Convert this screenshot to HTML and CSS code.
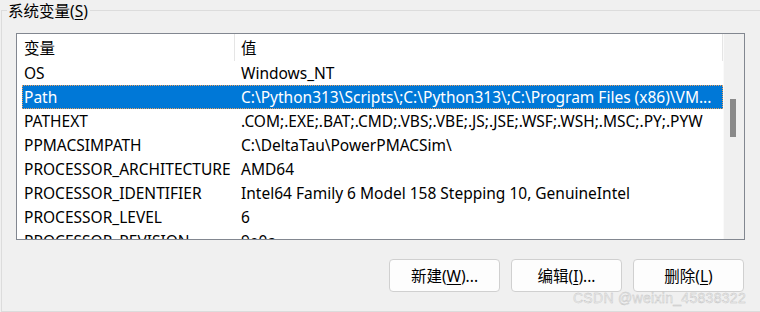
FILE: index.html
```html
<!DOCTYPE html>
<html lang="zh-CN">
<head>
<meta charset="utf-8">
<title>系统变量</title>
<link rel="stylesheet" href="styles.css">
</head>
<body>
<div class="group">
  <div class="title">系统变量(<u>S</u>)</div>
  <div class="listbox">
    <div class="content">
      <div class="header">
        <div class="hcell first">变量</div>
        <div class="hcell second">值</div>
      </div>
      <div class="row"><span class="c1">OS</span><span class="c2">Windows_NT</span></div>
      <div class="row sel"><span class="c1">Path</span><span class="c2">C:\Python313\Scripts\;C:\Python313\;C:\Program Files (x86)\VM...</span></div>
      <div class="row"><span class="c1">PATHEXT</span><span class="c2">.COM;.EXE;.BAT;.CMD;.VBS;.VBE;.JS;.JSE;.WSF;.WSH;.MSC;.PY;.PYW</span></div>
      <div class="row"><span class="c1">PPMACSIMPATH</span><span class="c2">C:\DeltaTau\PowerPMACSim\</span></div>
      <div class="row"><span class="c1">PROCESSOR_ARCHITECTURE</span><span class="c2">AMD64</span></div>
      <div class="row"><span class="c1">PROCESSOR_IDENTIFIER</span><span class="c2">Intel64 Family 6 Model 158 Stepping 10, GenuineIntel</span></div>
      <div class="row"><span class="c1">PROCESSOR_LEVEL</span><span class="c2">6</span></div>
      <div class="row"><span class="c1">PROCESSOR_REVISION</span><span class="c2">9e0a</span></div>
    </div>
    <div class="scrollbar"><div class="thumb"></div></div>
  </div>
  <div class="buttons">
    <button class="btn">新建(<u>W</u>)...</button>
    <button class="btn">编辑(<u>I</u>)...</button>
    <button class="btn">删除(<u>L</u>)</button>
  </div>
</div>
<div class="watermark">CSDN @weixin_45838322</div>
</body>
</html>
```
FILE: styles.css
```css
html, body {
  margin: 0;
  padding: 0;
}
body {
  width: 760px;
  height: 312px;
  overflow: hidden;
  background: #f0f0f0;
  font-family: "Noto Sans", "Noto Sans CJK SC", sans-serif;
  font-size: 15.5px;
  color: #000;
  position: relative;
}
.group {
  margin: 10px 0 0 1px;
  border: 1px solid #dcdcdc;
  border-right: none;
  height: 300px;
  box-sizing: content-box;
}
.title {
  width: fit-content;
  margin: -9px 0 0 5px;
  padding: 0 2px 0 1px;
  background: #f0f0f0;
  line-height: 19px;
  height: 19px;
}
.title u, .btn u {
  text-decoration-thickness: 1px;
  text-underline-offset: 2px;
}
.listbox {
  margin: 12px 0 0 14px;
  width: 729px;
  height: 207px;
  box-sizing: border-box;
  border: 1px solid #828790;
  background: #fff;
  display: flex;
  overflow: hidden;
}
.content {
  width: 706px;
  flex: none;
  overflow: hidden;
}
.header {
  display: flex;
  height: 27px;
  padding-left: 5px;
}
.hcell {
  line-height: 26px;
  padding-top: 1px;
  box-sizing: border-box;
}
.hcell.first {
  width: 213px;
  padding-left: 2px;
  border-right: 1px solid #e5e5e5;
}
.hcell.second {
  flex: 1;
  padding-left: 6px;
  border-right: 1px solid #e5e5e5;
}
.row {
  display: grid;
  grid-template-columns: 217px 1fr;
  height: 24px;
  line-height: 23px;
  margin-left: 5px;
  white-space: nowrap;
  box-sizing: border-box;
  border: 1px solid transparent;
}
.row span {
  padding-left: 1px;
  overflow: hidden;
}
.row.sel {
  background: #0078d7;
  color: #fff;
  border: 1px dotted #e9a060;
}
.scrollbar {
  flex: 1;
  background: #f0f0f0;
  border-left: 1px solid #fafafa;
  position: relative;
}
.thumb {
  margin: 65px 0 0 6px;
  width: 6px;
  height: 38px;
  background: #8a8a8a;
}
.buttons {
  display: flex;
  justify-content: flex-end;
  gap: 11px;
  width: 729px;
  margin: 19px 0 0 14px;
  padding-right: 1px;
  box-sizing: border-box;
}
.btn {
  width: 111px;
  height: 33px;
  background: #fdfdfd;
  border: 1px solid #d0d0d0;
  border-radius: 4px;
  font-family: "Noto Sans", "Noto Sans CJK SC", sans-serif;
  font-size: 15.5px;
  color: #000;
  padding: 0;
}
.watermark {
  position: absolute;
  right: 14px;
  bottom: 6px;
  font-family: "Liberation Sans", sans-serif;
  font-size: 14px;
  color: #eeeeee;
  -webkit-text-stroke: 0.4px #c2c2c2;
  letter-spacing: 0.3px;
}
```
